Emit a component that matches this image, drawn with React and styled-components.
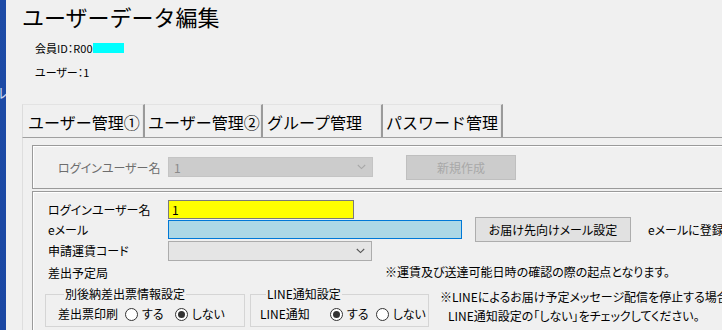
import React from "react";
import styled, { createGlobalStyle } from "styled-components";

const Global = createGlobalStyle`
  html, body { margin: 0; padding: 0; background: #f0f0f0; }
  body { font-family: "Noto Sans CJK JP", "Noto Sans", sans-serif; }
  * { box-sizing: border-box; }
`;

const Screen = styled.div`
  display: flex;
  width: 722px;
  height: 330px;
  overflow: hidden;
  background: #f0f0f0;
`;

const Strip = styled.div`
  position: relative;
  width: 6px;
  flex: none;
  background: linear-gradient(180deg, #1d4ba6 0%, #1a47a3 100%);
  overflow: hidden;
`;

const StripGlyph = styled.span`
  position: absolute;
  left: -7px;
  top: 84px;
  font-size: 14px;
  line-height: 16px;
  color: #c8d4f0;
`;

const Window = styled.div`
  flex: 1;
  min-width: 0;
  display: flex;
  flex-direction: column;
  overflow: hidden;
  color: #000;
  & > * { flex: none; }
`;

const Title = styled.h1`
  margin: 0 0 0 16px;
  height: 32px;
  font-size: 22px;
  line-height: 32px;
  font-weight: 400;
  white-space: nowrap;
`;

const Info = styled.div`
  margin: 4px 0 0 29px;
  display: flex;
  flex-direction: column;
`;

const InfoLine = styled.div`
  height: 24px;
  display: flex;
  align-items: center;
  font-size: 11px;
  font-feature-settings: "palt";
  white-space: nowrap;
`;

const Masked = styled.span`
  display: inline-block;
  width: 31px;
  height: 10px;
  background: #00ffff;
`;

const TabRow = styled.div`
  margin: 20px 0 0 16px;
  height: 33px;
  display: flex;
  align-items: stretch;
`;

const Tab = styled.div`
  width: ${(p) => p.$w}px;
  flex: none;
  display: flex;
  align-items: center;
  padding: 2px 0 0 ${(p) => p.$pl || 5}px;
  font-size: 16px;
  white-space: nowrap;
  border-top: 1px solid #e3e3e3;
  border-left: ${(p) => (p.$first ? "1px solid #dcdcdc" : "none")};
  border-right: 2px solid #9a9a9a;
  box-shadow: inset -1px 0 0 #e8e8e8;
`;

const Panel = styled.div`
  margin-left: 16px;
  border-top: 1px solid #a0a0a0;
  border-left: 1px solid #dedede;
  padding: 7px 0 0 9px;
  width: 900px;
  height: 200px;
`;

const GroupBox = styled.div`
  border: 1px solid #9a9a9a;
  box-shadow: inset 1px 1px 0 #ffffff;
  margin-bottom: ${(p) => p.$mb || 0}px;
  height: ${(p) => p.$h}px;
  padding: ${(p) => p.$pad};
`;

const Line = styled.div`
  display: flex;
  align-items: center;
  height: ${(p) => p.$h}px;
  margin-top: ${(p) => p.$mt || 0}px;
`;

const Label = styled.div`
  width: ${(p) => p.$w}px;
  flex: none;
  padding-left: ${(p) => p.$pl || 0}px;
  font-size: 12px;
  font-feature-settings: "palt";
  color: ${(p) => (p.$disabled ? "#6d6d6d" : "#000")};
  white-space: nowrap;
`;

const Combo = styled.div`
  width: ${(p) => p.$w}px;
  height: ${(p) => p.$h}px;
  flex: none;
  display: flex;
  align-items: center;
  justify-content: space-between;
  padding: 0 6px 0 5px;
  font-size: 12px;
  color: ${(p) => (p.$disabled ? "#8a8a8a" : "#000")};
  background: ${(p) => (p.$disabled ? "#cccccc" : "#e5e5e5")};
  border: 1px solid ${(p) => (p.$disabled ? "#c4c4c4" : "#acacac")};
`;

const TextBox = styled.div`
  width: ${(p) => p.$w}px;
  height: ${(p) => p.$h}px;
  flex: none;
  display: flex;
  align-items: center;
  padding-left: 3px;
  font-size: 12px;
  background: ${(p) => p.$bg};
  border: 1px solid ${(p) => p.$border};
`;

const Button = styled.div`
  width: ${(p) => p.$w}px;
  height: 25px;
  flex: none;
  margin-left: ${(p) => p.$ml}px;
  display: flex;
  align-items: center;
  justify-content: center;
  font-size: 12px;
  font-feature-settings: "palt";
  white-space: nowrap;
  color: ${(p) => (p.$disabled ? "#a8a8a8" : "#000")};
  background: ${(p) => (p.$disabled ? "#cccccc" : "#e1e1e1")};
  border: 1px solid ${(p) => (p.$disabled ? "#bfbfbf" : "#adadad")};
`;

const Note = styled.div`
  margin-left: ${(p) => p.$ml}px;
  font-size: 12px;
  font-feature-settings: "palt";
  white-space: nowrap;
  line-height: ${(p) => p.$lh || 20}px;
`;

const NoteIndent = styled.div`
  padding-left: 8px;
`;

const Bottom = styled.div`
  display: flex;
  align-items: flex-start;
  margin-top: 5px;
  padding-left: 12px;
`;

const Field = styled.fieldset`
  margin: 0 ${(p) => p.$mr || 0}px 0 0;
  width: ${(p) => p.$w}px;
  flex: none;
  border: 1px solid #d5d5d5;
  padding: 0 0 3px ${(p) => p.$pl}px;
  min-width: 0;
`;

const Legend = styled.legend`
  margin-left: ${(p) => p.$ml}px;
  padding: 0 1px;
  font-size: 12px;
  line-height: 14px;
  font-feature-settings: "palt";
  white-space: nowrap;
`;

const Options = styled.div`
  display: flex;
  align-items: center;
  gap: ${(p) => p.$gap}px;
`;

const Option = styled.label`
  display: flex;
  align-items: center;
  gap: 4px;
  font-size: 12px;
  font-feature-settings: "palt";
  white-space: nowrap;
`;

const Circle = styled.span`
  width: 13px;
  height: 13px;
  border-radius: 50%;
  border: 1px solid #333;
  background: #fff;
  display: flex;
  align-items: center;
  justify-content: center;
  margin-top: 2px;
  &::after {
    content: "";
    width: 7px;
    height: 7px;
    border-radius: 50%;
    background: ${(p) => (p.$on ? "#333" : "transparent")};
  }
`;

const Chevron = ({ color }) => (
  <svg width="9" height="6" viewBox="0 0 9 6">
    <path d="M0.8 1 L4.5 4.6 L8.2 1" fill="none" stroke={color} strokeWidth="1.1" />
  </svg>
);

const Radio = ({ on, children }) => (
  <Option>
    <Circle $on={on} />
    {children}
  </Option>
);

export default function App() {
  return (
    <>
      <Global />
      <Screen>
        <Strip>
          <StripGlyph>ル</StripGlyph>
        </Strip>
        <Window>
          <Title>ユーザーデータ編集</Title>
          <Info>
            <InfoLine>
              会員ID：R00
              <Masked />
            </InfoLine>
            <InfoLine>ユーザー：1</InfoLine>
          </Info>
          <TabRow>
            <Tab $w={123} $first $pl={5}>ユーザー管理①</Tab>
            <Tab $w={118} $pl={3}>ユーザー管理②</Tab>
            <Tab $w={120} $pl={4}>グループ管理</Tab>
            <Tab $w={120} $pl={3}>パスワード管理</Tab>
          </TabRow>
          <Panel>
            <GroupBox $h={44} $mb={2} $pad="0 0 0 25px">
              <Line $h={42}>
                <Label $w={110} $disabled>ログインユーザー名</Label>
                <Combo $w={205} $h={20} $disabled>
                  1
                  <Chevron color="#a8a8a8" />
                </Combo>
                <Button $w={110} $ml={33} $disabled>新規作成</Button>
              </Line>
            </GroupBox>
            <GroupBox $pad="8px 0 0 0" $h={160}>
              <Line $h={19}>
                <Label $w={135} $pl={15}>ログインユーザー名</Label>
                <TextBox $w={186} $h={19} $bg="#ffff00" $border="#7a7a7a">1</TextBox>
              </Line>
              <Line $h={19} $mt={1}>
                <Label $w={135} $pl={15}>eメール</Label>
                <TextBox $w={294} $h={19} $bg="#add8e6" $border="#0078d7" />
                <Button $w={156} $ml={13}>お届け先向けメール設定</Button>
                <Note $ml={17}>eメールに登録</Note>
              </Line>
              <Line $h={19} $mt={2}>
                <Label $w={135} $pl={15}>申請運賃コード</Label>
                <Combo $w={204} $h={20}>
                  <span />
                  <Chevron color="#555" />
                </Combo>
              </Line>
              <Line $h={20} $mt={2}>
                <Label $w={135} $pl={15}>差出予定局</Label>
                <Note $ml={217}>※運賃及び送達可能日時の確認の際の起点となります。</Note>
              </Line>
              <Bottom>
                <Field $w={200} $mr={5} $pl={12}>
                  <Legend $ml={6}>別後納差出票情報設定</Legend>
                  <Line $h={20} $mt={2}>
                    <Label $w={67}>差出票印刷</Label>
                    <Options $gap={11}>
                      <Radio on={false}>する</Radio>
                      <Radio on>しない</Radio>
                    </Options>
                  </Line>
                </Field>
                <Field $w={179} $pl={9}>
                  <Legend $ml={6}>LINE通知設定</Legend>
                  <Line $h={20} $mt={2}>
                    <Label $w={70}>LINE通知</Label>
                    <Options $gap={7}>
                      <Radio on>する</Radio>
                      <Radio on={false}>しない</Radio>
                    </Options>
                  </Line>
                </Field>
                <Note $ml={11} $lh={19}>
                  ※LINEによるお届け予定メッセージ配信を停止する場合は、
                  <NoteIndent>LINE通知設定の「しない」をチェックしてください。</NoteIndent>
                </Note>
              </Bottom>
            </GroupBox>
          </Panel>
        </Window>
      </Screen>
    </>
  );
}
